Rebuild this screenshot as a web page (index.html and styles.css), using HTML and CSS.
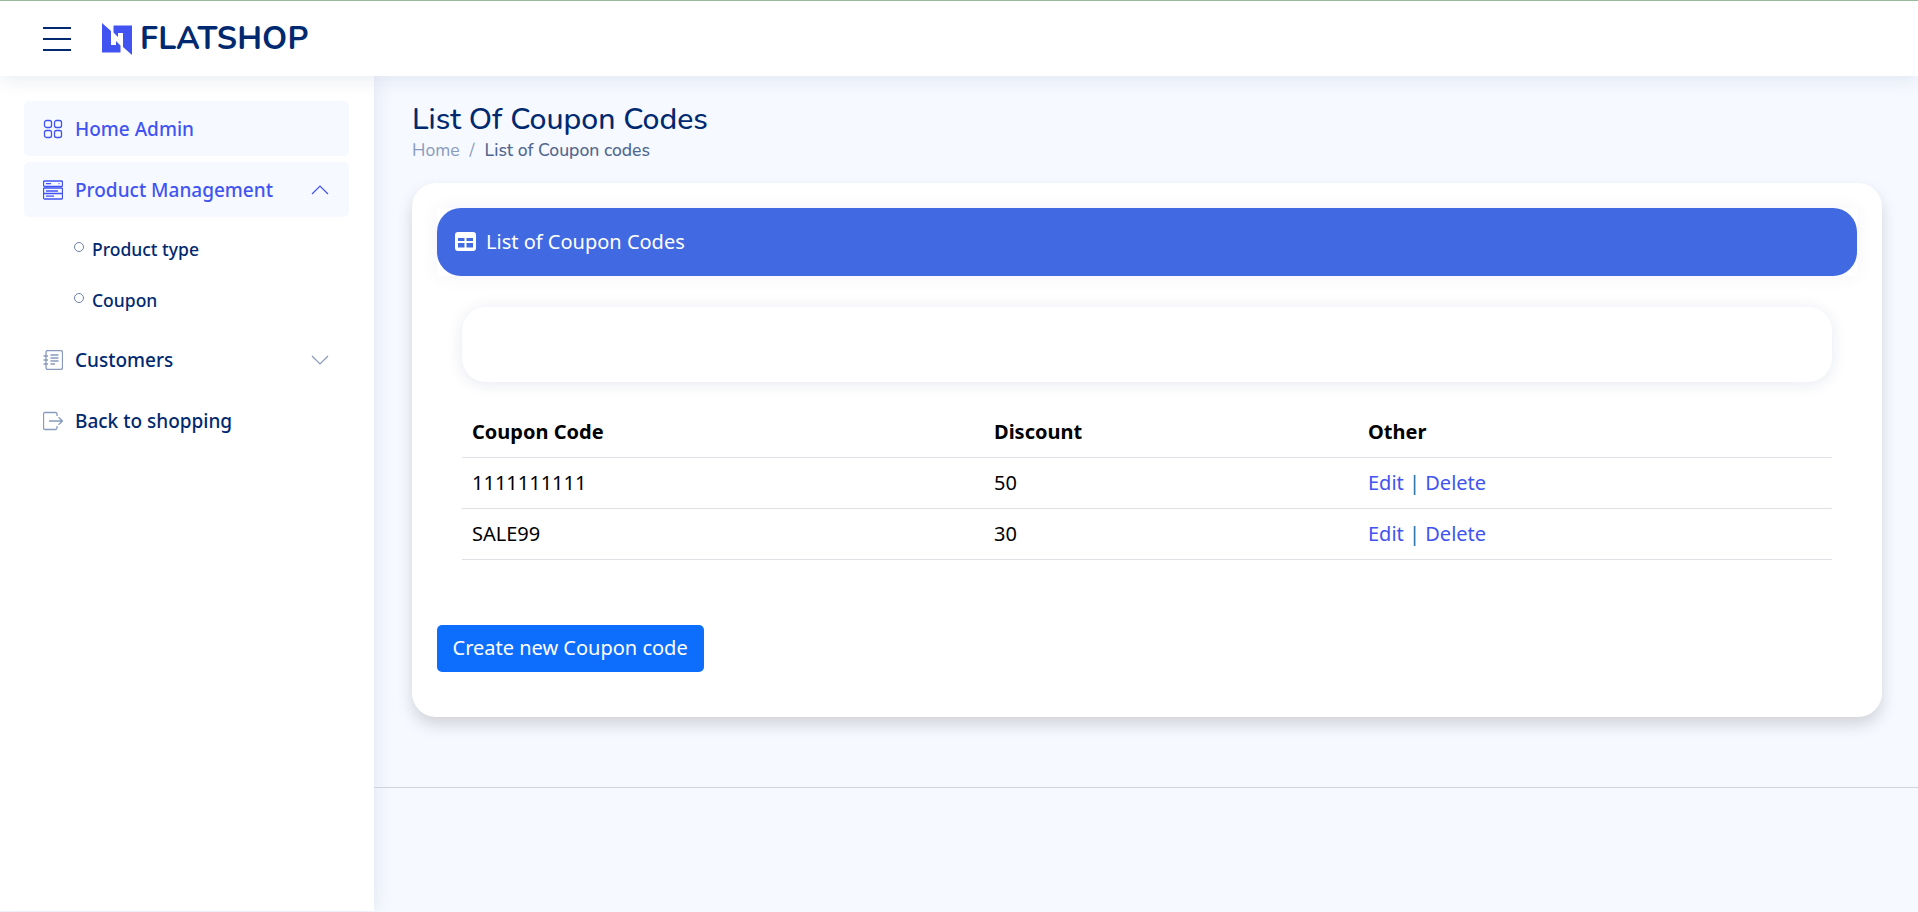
FILE: index.html
```html
<!DOCTYPE html>
<html lang="en">
<head>
    <meta charset="UTF-8">
    <meta name="viewport" content="width=device-width, initial-scale=1.0">
    <title>List Of Coupon Codes</title>
    <link rel="stylesheet" href="styles.css">
</head>
<body>
    <header class="topbar">
        <button class="burger" aria-label="Menu"><span></span><span></span><span></span></button>
        <a class="logo" href="#">
            <svg class="logo-mark" viewBox="0 0 30 32" width="30" height="32">
                <path fill="#4154f1" d="M0 0 L9 8 V22 H14 V18 L18.5 22.5 V29.5 H0 Z"/>
                <path fill="#4154f1" d="M30 32 L21 24 V10 H16 V14 L11.5 9.5 V2.5 H30 Z"/>
            </svg>
            <span class="logo-text">FLATSHOP</span>
        </a>
    </header>

    <div class="layout">
        <aside class="sidebar">
            <a class="nav-item active" href="#">
                <svg class="nav-icon" viewBox="0 0 20 20"><rect x="1.5" y="1.5" width="7" height="7" rx="2"/><rect x="11.5" y="1.5" width="7" height="7" rx="2"/><rect x="1.5" y="11.5" width="7" height="7" rx="2"/><rect x="11.5" y="11.5" width="7" height="7" rx="2"/></svg>
                <span>Home Admin</span>
            </a>
            <a class="nav-item active" href="#">
                <svg class="nav-icon" viewBox="0 0 20 20"><rect x="0.5" y="1" width="19" height="5.5" rx="1.2"/><rect x="0.5" y="8" width="19" height="11" rx="1.2"/><path d="M0.5 13.5 H19.5 M3 3.7 H8 M15.5 3.7 H16.5 M3 11 H15 M3 16.2 H11"/></svg>
                <span>Product Management</span>
                <svg class="chevron" viewBox="0 0 18 10"><path d="M1 9 L9 1 L17 9"/></svg>
            </a>
            <ul class="subnav">
                <li><a href="#">Product type</a></li>
                <li><a href="#">Coupon</a></li>
            </ul>
            <a class="nav-item" href="#">
                <svg class="nav-icon" viewBox="0 0 20 20"><path d="M3 2.5 Q3 0.5 5 0.5 H17.5 Q19.5 0.5 19.5 2.5 V17.5 Q19.5 19.5 17.5 19.5 H5 Q3 19.5 3 17.5 Z"/><path d="M7.5 5 H15.5 M7.5 8 H15.5 M7.5 11 H15.5 M7.5 14 H12 M0.5 6 H5 M0.5 10 H5 M0.5 14 H5"/></svg>
                <span>Customers</span>
                <svg class="chevron" viewBox="0 0 18 10"><path d="M1 1 L9 9 L17 1"/></svg>
            </a>
            <a class="nav-item" href="#">
                <svg class="nav-icon" viewBox="0 0 20 20"><path d="M14 5 V3 Q14 1.5 12.5 1.5 H2 Q0.5 1.5 0.5 3 V17 Q0.5 18.5 2 18.5 H12.5 Q14 18.5 14 17 V15 M6 10 H19 M15.5 6.2 L19.5 10 L15.5 13.8"/></svg>
                <span>Back to shopping</span>
            </a>
        </aside>

        <main class="content">
            <div class="pagetitle">
                <h1>List Of Coupon Codes</h1>
                <nav class="breadcrumb"><a href="#">Home</a><i>/</i><span>List of Coupon codes</span></nav>
            </div>

            <section class="card">
                <div class="card-head">
                    <div class="card-header">
                        <svg class="table-icon" viewBox="0 0 21 19"><path fill="#fff" fill-rule="evenodd" d="M3 0 H18 Q21 0 21 3 V16 Q21 19 18 19 H3 Q0 19 0 16 V3 Q0 0 3 0 Z M3 6 V9 H9.5 V6 Z M11.5 6 V9 H18 V6 Z M3 11 V15.5 H9.5 V11 Z M11.5 11 V15.5 H18 V11 Z"/></svg>
                        <span>List of Coupon Codes</span>
                    </div>
                </div>
                <div class="card-body">
                    <div class="filter-box"></div>
                    <table class="coupon-table">
                        <thead>
                            <tr><th class="col-code">Coupon Code</th><th class="col-discount">Discount</th><th>Other</th></tr>
                        </thead>
                        <tbody>
                            <tr><td>1111111111</td><td>50</td><td><a href="#">Edit</a> <span class="sep">|</span> <a href="#">Delete</a></td></tr>
                            <tr><td>SALE99</td><td>30</td><td><a href="#">Edit</a> <span class="sep">|</span> <a href="#">Delete</a></td></tr>
                        </tbody>
                    </table>
                </div>
                <a class="btn-create" href="#">Create new Coupon code</a>
            </section>

            <footer class="footer"></footer>
        </main>
    </div>
</body>
</html>
```

FILE: styles.css
```css
* {
    box-sizing: border-box;
}
body {
    margin: 0;
    height: 912px;
    overflow: hidden;
    font-family: "Noto Sans", "Open Sans", sans-serif;
    font-size: 20px;
    background-color: #f6f9ff;
    color: #012970;
}
a {
    text-decoration: none;
    color: inherit;
}
.topbar {
    position: relative;
    z-index: 2;
    height: 76px;
    display: flex;
    align-items: center;
    padding-left: 43px;
    background: white;
    border-top: 1px solid #9ab99a;
    box-shadow: 0 2px 20px rgba(1,41,112,0.1);
}
.burger {
    width: 28px;
    height: 24px;
    padding: 0;
    border: none;
    background: none;
    display: flex;
    flex-direction: column;
    justify-content: space-between;
}
.burger span {
    display: block;
    height: 2px;
    background-color: #012970;
}
.logo {
    display: flex;
    align-items: center;
    gap: 8px;
    margin-left: 31px;
}
.logo-text {
    font-family: "Nunito", "Lato", sans-serif;
    font-size: 32px;
    font-weight: 700;
    letter-spacing: 0.2px;
    line-height: 1;
    color: #012970;
}
.layout {
    display: grid;
    grid-template-columns: 374px 1fr;
    height: 835px;
}
.sidebar {
    background: white;
    padding: 25px 25px 0 24px;
    box-shadow: 0 0 20px rgba(1,41,112,0.1);
}
.nav-item {
    height: 55px;
    margin-bottom: 6px;
    padding-left: 19px;
    padding-right: 20px;
    display: flex;
    align-items: center;
    gap: 12px;
    border-radius: 5px;
    font-size: 19px;
    font-weight: 500;
    color: #012970;
}
.nav-item.active {
    background-color: #f6f9ff;
    color: #4154f1;
}
.nav-icon {
    width: 20px;
    height: 20px;
    fill: none;
    stroke: #899bbd;
    stroke-width: 1.3;
}
.active .nav-icon {
    stroke: #4154f1;
}
.chevron {
    width: 18px;
    height: 10px;
    margin-left: auto;
    fill: none;
    stroke: #899bbd;
    stroke-width: 1.2;
}
.active .chevron {
    stroke: #4154f1;
}
.subnav {
    list-style: none;
    margin: 0 0 7px;
    padding: 0 0 0 50px;
}
.subnav li {
    height: 51px;
    display: flex;
    align-items: center;
}
.subnav a {
    display: flex;
    align-items: center;
    gap: 8px;
    font-size: 17.5px;
    font-weight: 500;
    color: #012970;
}
.subnav a::before {
    content: "";
    width: 8px;
    height: 8px;
    margin-top: -3px;
    border: 1px solid #6f7fa8;
    border-radius: 50%;
}
.content {
    padding: 25px 36px 0 38px;
    min-width: 0;
}
.pagetitle {
    margin-bottom: 21px;
}
.pagetitle h1 {
    margin: 0;
    font-family: "Nunito", "Lato", sans-serif;
    font-size: 30.2px;
    font-weight: 500;
    line-height: 36px;
    color: #012970;
}
.breadcrumb {
    margin-top: 1px;
    font-family: "Nunito", "Lato", sans-serif;
    font-size: 17.6px;
    line-height: 24px;
    color: #989797;
}
.breadcrumb a {
    color: #899bbd;
}
.breadcrumb i {
    margin: 0 10px;
    font-style: normal;
    color: #899bbd;
}
.breadcrumb span {
    font-weight: 500;
    color: #51678f;
}
.card {
    height: 534px;
    padding: 25px 25px 0;
    background: white;
    border-radius: 24px;
    box-shadow: 0 8px 16px rgba(0,0,0,0.15);
}
.card-head {
    background: white;
    border-radius: 3px;
    box-shadow: 0 0 20px rgba(1,41,112,0.05);
}
.card-header {
    height: 68px;
    display: flex;
    align-items: center;
    gap: 10px;
    padding-left: 18px;
    padding-bottom: 1px;
    background-color: #4169e1;
    border-radius: 24px;
    font-size: 20px;
    color: white;
}
.table-icon {
    width: 21px;
    height: 19px;
}
.card-body {
    padding: 31px 25px 0;
}
.filter-box {
    height: 75px;
    background: white;
    border-radius: 24px;
    box-shadow: 0 2px 16px rgba(1,41,112,0.1);
}
.coupon-table {
    width: 100%;
    margin-top: 24px;
    border-collapse: collapse;
    color: black;
    font-size: 20px;
}
.coupon-table th,
.coupon-table td {
    height: 51px;
    padding: 0 10px;
    text-align: left;
    border-bottom: 1px solid #dee2e6;
}
.coupon-table th {
    font-weight: 700;
}
.coupon-table a {
    color: #4154f1;
}
.sep {
    color: #0f77a8;
}
.col-code {
    width: 522px;
}
.col-discount {
    width: 374px;
}
.btn-create {
    display: inline-flex;
    align-items: center;
    height: 47px;
    margin-top: 65px;
    padding: 0 16px 2px 15.5px;
    background-color: #0d6efd;
    border-radius: 5px;
    color: white;
    font-size: 20px;
}
.footer {
    margin: 70px -36px 0 -38px;
    border-top: 1px solid #cfd3dc;
}
```
